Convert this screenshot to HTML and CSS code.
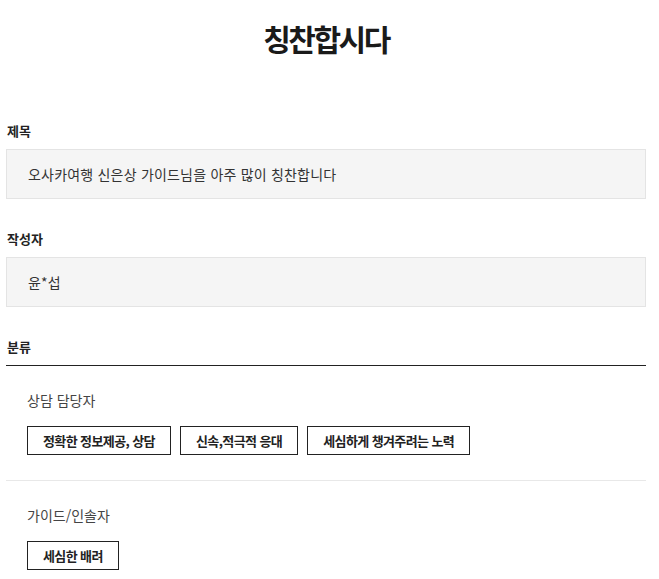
FILE: index.html
```html
<!DOCTYPE html>
<html lang="ko">
<head>
    <meta charset="UTF-8">
    <meta name="viewport" content="width=device-width, initial-scale=1.0">
    <title>칭찬합시다</title>
    <link rel="stylesheet" href="styles.css">
</head>
<body>
    <div class="praise-view">
        <h1 class="page-title">칭찬합시다</h1>

        <div class="field">
            <div class="field-label">제목</div>
            <div class="field-box">오사카여행 신은상 가이드님을 아주 많이 칭찬합니다</div>
        </div>

        <div class="field">
            <div class="field-label">작성자</div>
            <div class="field-box">윤*섭</div>
        </div>

        <div class="field">
            <div class="field-label category-head">분류</div>
            <div class="category-group">
                <div class="group-name">상담 담당자</div>
                <div class="tag-list">
                    <span class="tag">정확한 정보제공, 상담</span>
                    <span class="tag">신속,적극적 응대</span>
                    <span class="tag">세심하게 챙겨주려는 노력</span>
                </div>
            </div>
            <div class="category-group">
                <div class="group-name">가이드/인솔자</div>
                <div class="tag-list">
                    <span class="tag">세심한 배려</span>
                </div>
            </div>
        </div>
    </div>
</body>
</html>
```

FILE: styles.css
```css
body {
    font-family: "Noto Sans CJK KR", "Noto Sans", sans-serif;
    background-color: #fff;
    color: #333;
    margin: 0;
    padding: 0;
}
.praise-view {
    width: 640px;
    padding: 0 0 0 6px;
}
.page-title {
    margin: 0;
    padding-top: 20px;
    line-height: 36px;
    font-size: 30px;
    font-weight: 700;
    letter-spacing: -2.5px;
    text-align: center;
    color: #1a1a1a;
}
.field {
    margin-top: 30px;
}
.praise-view .field:first-of-type {
    margin-top: 65px;
}
.field-label {
    padding-left: 1px;
    line-height: 20px;
    font-size: 13px;
    font-weight: 700;
    color: #222;
}
.field-box {
    margin-top: 8px;
    height: 48px;
    line-height: 48px;
    padding-left: 21px;
    background-color: #f5f5f5;
    border: 1px solid #e4e4e4;
    font-size: 14px;
    letter-spacing: 0.2px;
    color: #333;
}
.category-head {
    padding-bottom: 8px;
    border-bottom: 1px solid #222;
}
.category-group {
    padding: 24px 0 25px 21px;
    border-bottom: 1px solid #e8e8e8;
}
.category-group:last-child {
    border-bottom: none;
}
.group-name {
    line-height: 20px;
    font-size: 14px;
    color: #444;
}
.tag-list {
    display: flex;
    gap: 9px;
    margin-top: 16px;
}
.tag {
    display: inline-block;
    height: 27px;
    line-height: 27px;
    padding: 0 15px;
    border: 1px solid #222;
    font-size: 13px;
    font-weight: 700;
    letter-spacing: -0.6px;
    color: #222;
}
```
